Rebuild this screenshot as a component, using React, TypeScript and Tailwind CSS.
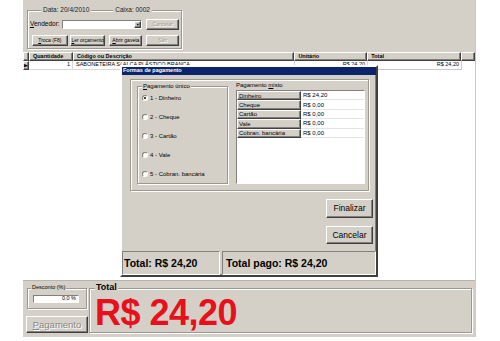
import React from "react";

const raised =
  "bg-[#d4d0c8] border border-t-white border-l-white border-r-[#404040] border-b-[#404040] shadow-[inset_-1px_-1px_0_#808080]";
const sunken =
  "border border-t-[#808080] border-l-[#808080] border-r-white border-b-white";
const etched =
  "border border-[#9c9890] shadow-[inset_1px_1px_0_#ffffff,1px_1px_0_#ffffff]";

const Btn = ({
  label,
  className,
  disabled,
}: {
  label: React.ReactNode;
  className: string;
  disabled?: boolean;
}) => (
  <div
    className={`${raised} ${className} flex items-center justify-center leading-none ${
      disabled ? "text-[#a09c94] [text-shadow:1px_1px_0_#ffffff]" : "text-black"
    }`}
  >
    {label}
  </div>
);

const Radio = ({ label, checked }: { label: string; checked?: boolean }) => (
  <div className="flex items-center gap-[2px] text-[6px] leading-none">
    <div className="flex h-[6px] w-[6px] items-center justify-center rounded-full border border-t-[#808080] border-l-[#808080] border-r-white border-b-white bg-white">
      {checked && <div className="h-[2px] w-[2px] rounded-full bg-black" />}
    </div>
    <span>{label}</span>
  </div>
);

const misto = [
  ["Dinheiro", "R$ 24,20"],
  ["Cheque", "R$ 0,00"],
  ["Cartão", "R$ 0,00"],
  ["Vale", "R$ 0,00"],
  ["Cobran. bancária", "R$ 0,00"],
];

export default function App() {
  return (
    <div className="relative h-[341px] w-[500px] overflow-hidden bg-white font-['Liberation_Sans',Arial,sans-serif] text-black">
      <div className="flex h-full">
        <div className="w-[23px] shrink-0" />
        <div className="flex h-[337px] w-[453px] shrink-0 flex-col border-r border-[#c8c8c8]">
          {/* top toolbar */}
          <div className="h-[52px] shrink-0 bg-[#d4d0c8] pl-[4px] pt-[10px]">
            <div className={`${etched} h-[39px] w-[155px] px-[2px]`}>
              <div className="-mt-[5px] flex h-[9px] items-center text-[6.5px] leading-none text-[#222]">
                <span className="ml-[11px] bg-[#d4d0c8] px-[2px]">Data: 20/4/2010</span>
                <span className="ml-[22px] bg-[#d4d0c8] px-[2px]">Caixa: 0002</span>
              </div>
              <div className="mt-[4px] flex h-[11px] items-center">
                <span className="w-[32px] text-[6.5px] leading-none">
                  <u>V</u>endedor:
                </span>
                <div className="flex h-[9px] w-[81px] items-stretch border border-t-[#808080] border-l-[#808080] border-r-white border-b-white bg-white">
                  <div className="flex-1" />
                  <div className={`${raised} flex w-[7px] items-center justify-center text-[4px] leading-none`}>
                    ▼
                  </div>
                </div>
                <Btn label="Cancelar" disabled className="ml-[4px] h-[11px] w-[33px] text-[5px]" />
              </div>
              <div className="mt-[5px] flex h-[11px] items-center pl-[2px] text-[5px]">
                <Btn label={<span><u>T</u>roca (F8)</span>} className="h-[11px] w-[36px]" />
                <Btn label={<span><u>L</u>er orçamento</span>} className="ml-[2px] h-[11px] w-[36px]" />
                <Btn label={<span><u>A</u>brir gaveta</span>} className="ml-[4px] h-[11px] w-[33px]" />
                <Btn label="Sair" disabled className="ml-[4px] h-[11px] w-[33px]" />
              </div>
            </div>
          </div>

          {/* grid */}
          <div className="flex flex-1 flex-col bg-white">
            <div className="flex h-[9px] text-[5.5px] font-bold leading-none">
              <div className={`${raised} w-[6px]`} />
              <div className={`${raised} flex w-[44px] items-center pl-[3px]`}>Quantidade</div>
              <div className={`${raised} flex w-[222px] items-center pl-[3px]`}>Código ou Descrição</div>
              <div className={`${raised} flex w-[73px] items-center pl-[3px]`}>Unitário</div>
              <div className={`${raised} flex w-[94px] items-center pl-[3px]`}>Total</div>
              <div className={`${raised} w-[14px]`} />
            </div>
            <div className="flex h-[9px] text-[5.5px] leading-none">
              <div className={`${raised} flex w-[6px] items-center justify-center text-[5px]`}>▶</div>
              <div className="flex w-[44px] items-center justify-end border-r border-b border-[#d8d8d8] pr-[2px]">1</div>
              <div className="flex w-[222px] items-center border-r border-b border-[#d8d8d8] pl-[3px]">
                SABONETEIRA S/ ALÇA PLÁSTICO BRANCA
              </div>
              <div className="flex w-[73px] items-center justify-end border-r border-b border-[#d8d8d8] pr-[2px]">
                R$ 24,20
              </div>
              <div className="flex w-[94px] items-center justify-end border-r border-b border-[#c8c8c8] pr-[2px]">
                R$ 24,20
              </div>
            </div>
          </div>

          {/* bottom panel */}
          <div className="flex h-[57px] shrink-0 border-t border-[#b8b4ac] bg-[#d4d0c8] pt-[7px]">
            <div className="ml-[3px] flex w-[62px] flex-col">
              <div className={`${etched} mx-[1px] h-[21px]`}>
                <div className="-mt-[4px] ml-[3px] flex">
                  <span className="bg-[#d4d0c8] px-[1px] text-[5.5px] leading-none">Desconto (%)</span>
                </div>
                <div className="ml-[5px] mt-[4px] flex h-[8px] w-[46px] items-center justify-end border border-t-[#808080] border-l-[#808080] border-r-white border-b-white bg-white pr-[2px] text-[5.5px] leading-none">
                  0,0 %
                </div>
              </div>
              <Btn
                label={<span><u>P</u>agamento</span>}
                disabled
                className="mt-[7px] h-[17px] w-[62px] text-[9.5px] !text-[#8a8680]"
              />
            </div>
            <div className={`${etched} ml-[1px] h-[45px] w-[383px]`}>
              <div className="-mt-[6px] ml-[5px] flex">
                <span className="bg-[#d4d0c8] px-[1px] text-[9px] font-bold leading-none">Total</span>
              </div>
              <div className="ml-[5px] mt-[3px] text-[36px] font-bold leading-none tracking-[-0.5px] text-[#e8101a]">
                R$ 24,20
              </div>
            </div>
          </div>
        </div>
      </div>

      {/* dialog */}
      <div className={`${raised} absolute left-[120px] top-[65px] flex h-[212px] w-[258px] flex-col border-2`}>
        <div className="flex h-[8px] items-center bg-[#0c246c] pl-[1px] text-[5.5px] font-bold leading-none text-white">
          Formas de pagamento
        </div>
        <div className={`${etched} ml-[8px] mt-[4px] flex h-[112px] w-[239px]`}>
          <div className={`${etched} ml-[6px] mt-[6px] flex h-[98px] w-[91px] flex-col`}>
            <div className="-mt-[4px] ml-[4px] flex">
              <span className="bg-[#d4d0c8] px-[1px] text-[6px] leading-none">
                <u>P</u>agamento único
              </span>
            </div>
            <div className="ml-[4px] mt-[6px] flex flex-col gap-[13px]">
              <Radio label="1 - Dinheiro" checked />
              <Radio label="2 - Cheque" />
              <Radio label="3 - Cartão" />
              <Radio label="4 - Vale" />
              <Radio label="5 - Cobran. bancária" />
            </div>
          </div>
          <div className="ml-[8px] mt-[2px] flex flex-col">
            <div className="h-[8px] text-[6px] leading-none">
              Pagamento <u>m</u>isto
            </div>
            <div className={`${sunken} h-[94px] w-[129px] bg-white`}>
              {misto.map(([k, v]) => (
                <div key={k} className="flex h-[9.4px] text-[6px] leading-none">
                  <div className={`${raised} flex w-[64px] items-center pl-[1px]`}>{k}</div>
                  <div className="flex flex-1 items-center border-b border-[#e4e4e4] pl-[2px]">{v}</div>
                </div>
              ))}
            </div>
          </div>
        </div>
        <div className="mr-[3px] mt-[8px] flex flex-col items-end">
          <Btn label="Finalizar" className="h-[19px] w-[47px] text-[8.5px] shadow-[inset_-1px_-1px_0_#808080,0_0_0_1px_#000]" />
          <Btn label="Cancelar" className="mt-[8px] h-[18px] w-[47px] text-[8.5px]" />
        </div>
        <div className="mt-auto flex h-[24px] gap-[2px] text-[10.5px] font-bold leading-none">
          <div className={`${sunken} flex w-[98px] items-center pl-[1px]`}>Total: R$ 24,20</div>
          <div className={`${sunken} flex flex-1 items-center pl-[3px]`}>Total pago: R$ 24,20</div>
        </div>
      </div>
    </div>
  );
}
